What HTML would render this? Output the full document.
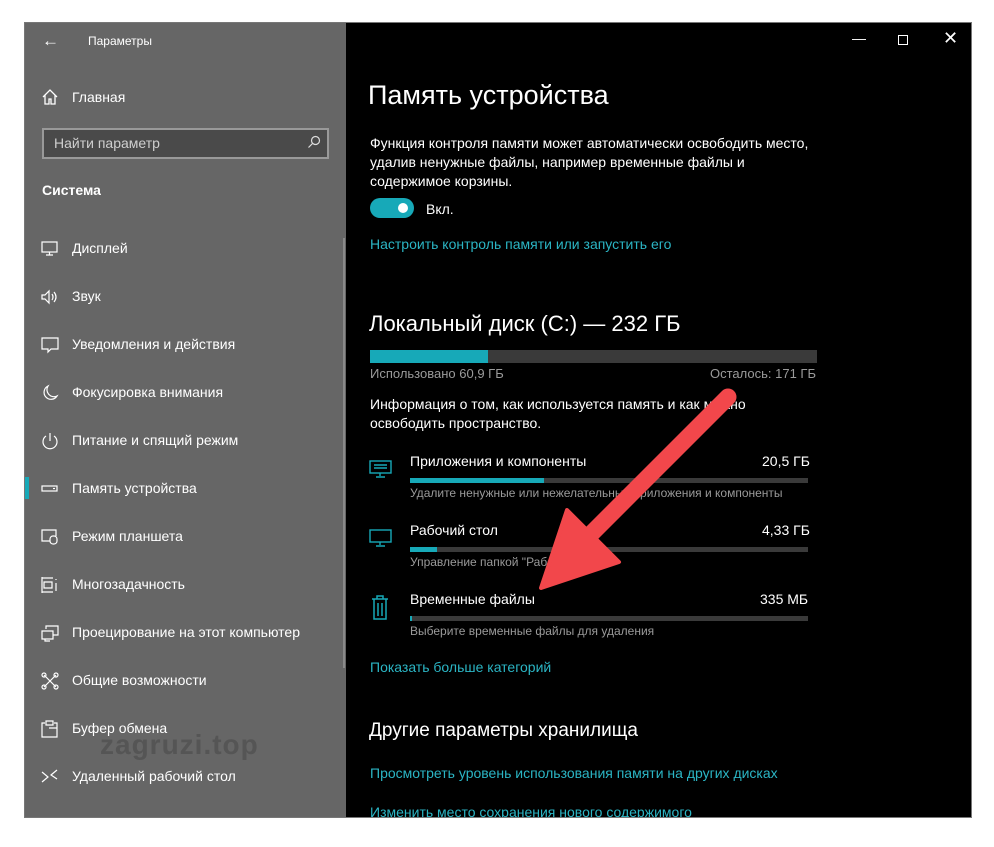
<!DOCTYPE html>
<html><head><meta charset="utf-8"><style>
*{margin:0;padding:0;box-sizing:border-box}
body{width:994px;height:847px;background:#fff;position:relative;overflow:hidden;font-family:"Liberation Sans",sans-serif}
.win{position:absolute;left:24px;top:22px;width:948px;height:796px;background:#000;border:1px solid #777;overflow:hidden}
.side{position:absolute;left:0;top:0;width:321px;height:796px;background:#666}
.t{position:absolute;white-space:nowrap}
.w{color:#fff}
.g{color:#9a9a9a}
.l{color:#2bb5c4}
.nav{position:absolute;left:47px;font-size:14px;color:#fff}
.ico{position:absolute;left:16px;width:18px;height:18px}
.bar{position:absolute;background:#3a3a3a}
.bar i{position:absolute;left:0;top:0;bottom:0;background:#17a9b8}
</style></head><body>
<div class="win">
 <div class="side">
  <div class="t w" style="left:17px;top:8px;font-size:17px">&#8592;</div>
  <div class="t w" style="left:63px;top:11px;font-size:12px">Параметры</div>
  <svg class="ico" style="top:65px" viewBox="0 0 18 18" fill="none" stroke="#fff" stroke-width="1.3"><path d="M2 9L9 2l7 7M4 7v9h4v-5h2v5h4V7"/></svg>
  <div class="nav" style="top:66px">Главная</div>
  <div style="position:absolute;left:17px;top:105px;width:287px;height:31px;border:2px solid #999;background:#4a4a4a"></div>
  <div class="t" style="left:29px;top:112px;font-size:14px;color:#cfcfcf">Найти параметр</div>
  <svg style="position:absolute;left:282px;top:112px" width="14" height="14" viewBox="0 0 14 14" fill="none" stroke="#ddd" stroke-width="1.2"><circle cx="8.5" cy="5.5" r="4"/><path d="M5.5 8.5L1.5 12.5"/></svg>
  <div class="t w" style="left:17px;top:159px;font-size:14px;font-weight:bold">Система</div>
  <div style="position:absolute;left:318px;top:215px;width:2px;height:430px;background:#8a8a8a"></div>
  <div style="position:absolute;left:0;top:454px;width:4px;height:22px;background:#17a9b8"></div>
  <svg class="ico" style="top:217px" viewBox="0 0 18 18" fill="none" stroke="#fff" stroke-width="1.2"><rect x="1" y="2" width="15" height="10"/><path d="M8.5 12v3M5 15h7"/></svg>
  <div class="nav" style="top:217px">Дисплей</div>
  <svg class="ico" style="top:265px" viewBox="0 0 18 18" fill="none" stroke="#fff" stroke-width="1.2"><path d="M1 7h3l4-4v12l-4-4H1zM11 6q2 3 0 6M13 4q4 5 0 10"/></svg>
  <div class="nav" style="top:265px">Звук</div>
  <svg class="ico" style="top:313px" viewBox="0 0 18 18" fill="none" stroke="#fff" stroke-width="1.2"><path d="M1 2h16v11H10l-3 3v-3H1z"/></svg>
  <div class="nav" style="top:313px">Уведомления и действия</div>
  <svg class="ico" style="top:361px" viewBox="0 0 18 18" fill="none" stroke="#fff" stroke-width="1.2"><path d="M7 2a7 7 0 1 0 9 10A7 7 0 0 1 7 2z"/></svg>
  <div class="nav" style="top:361px">Фокусировка внимания</div>
  <svg class="ico" style="top:409px" viewBox="0 0 18 18" fill="none" stroke="#fff" stroke-width="1.2"><path d="M5 4a7 7 0 1 0 8 0M9 1v8"/></svg>
  <div class="nav" style="top:409px">Питание и спящий режим</div>
  <svg class="ico" style="top:457px" viewBox="0 0 18 18" fill="none" stroke="#fff" stroke-width="1.2"><rect x="1" y="6" width="15" height="5"/><path d="M12 8.5h2"/></svg>
  <div class="nav" style="top:457px">Память устройства</div>
  <svg class="ico" style="top:505px" viewBox="0 0 18 18" fill="none" stroke="#fff" stroke-width="1.2"><path d="M9 13H1V2h14v6"/><rect x="9" y="8" width="7" height="8" rx="3"/></svg>
  <div class="nav" style="top:505px">Режим планшета</div>
  <svg class="ico" style="top:553px" viewBox="0 0 18 18" fill="none" stroke="#fff" stroke-width="1.2"><path d="M1 1v16M1 2h11M1 16h11M3 6h8v6H3zM15 3v1M15 7v8"/></svg>
  <div class="nav" style="top:553px">Многозадачность</div>
  <svg class="ico" style="top:601px" viewBox="0 0 18 18" fill="none" stroke="#fff" stroke-width="1.2"><path d="M5 5V2h12v9h-5M1 7h11v8H1zM4 15v2h5"/></svg>
  <div class="nav" style="top:601px">Проецирование на этот компьютер</div>
  <svg class="ico" style="top:649px" viewBox="0 0 18 18" fill="none" stroke="#fff" stroke-width="1.2"><path d="M3 3l12 12M15 3L3 15"/><circle cx="3" cy="3" r="2"/><circle cx="15" cy="3" r="2"/><circle cx="3" cy="15" r="2"/><circle cx="15" cy="15" r="2"/></svg>
  <div class="nav" style="top:649px">Общие возможности</div>
  <svg class="ico" style="top:697px" viewBox="0 0 18 18" fill="none" stroke="#fff" stroke-width="1.2"><path d="M4 3H1v14h15V3h-3M5 1h7v4H5zM8 8h8v9"/></svg>
  <div class="nav" style="top:697px">Буфер обмена</div>
  <div class="t" style="left:75px;top:706px;font-size:28px;font-weight:bold;color:#555;letter-spacing:1px">zagruzi.top</div>
  <svg class="ico" style="top:745px" viewBox="0 0 18 18" fill="none" stroke="#fff" stroke-width="1.2"><path d="M1 4l6 5-6 5M16 2l-6 5 6 4"/></svg>
  <div class="nav" style="top:745px">Удаленный рабочий стол</div>
 </div>
 <div class="t w" style="left:827px;top:7px;font-size:14px">&#8212;</div>
 <div style="position:absolute;left:873px;top:12px;width:10px;height:10px;border:1px solid #fff"></div>
 <div class="t w" style="left:918px;top:5px;font-size:18px">&#10005;</div>

 <div class="t w" style="left:343px;top:57px;font-size:27px">Память устройства</div>
 <div class="t w" style="left:345px;top:111px;font-size:14px;line-height:19px">Функция контроля памяти может автоматически освободить место,<br>удалив ненужные файлы, например временные файлы и<br>содержимое корзины.</div>
 <div style="position:absolute;left:345px;top:175px;width:44px;height:20px;border-radius:10px;background:#17a9b8"></div>
 <div style="position:absolute;left:373px;top:180px;width:10px;height:10px;border-radius:5px;background:#fff"></div>
 <div class="t w" style="left:401px;top:178px;font-size:14px">Вкл.</div>
 <div class="t l" style="left:345px;top:213px;font-size:14px">Настроить контроль памяти или запустить его</div>

 <div class="t w" style="left:344px;top:288px;font-size:22px">Локальный диск (C:) — 232 ГБ</div>
 <div class="bar" style="left:345px;top:327px;width:447px;height:13px"><i style="width:118px"></i></div>
 <div class="t g" style="left:345px;top:343px;font-size:13px">Использовано 60,9 ГБ</div>
 <div class="t g" style="left:685px;top:343px;font-size:13px">Осталось: 171 ГБ</div>
 <div class="t w" style="left:345px;top:372px;font-size:14px;line-height:19px">Информация о том, как используется память и как можно<br>освободить пространство.</div>

 <svg style="position:absolute;left:344px;top:436px" width="24" height="20" viewBox="0 0 24 20" fill="none" stroke="#17a9b8" stroke-width="1.4"><rect x="1" y="2" width="21" height="12"/><path d="M11 14v3M7 18h9M5 6h13M5 9h13"/></svg>
 <div class="t w" style="left:385px;top:430px;font-size:14px">Приложения и компоненты</div>
 <div class="t w" style="left:737px;top:430px;font-size:14px">20,5 ГБ</div>
 <div class="bar" style="left:385px;top:455px;width:398px;height:5px"><i style="width:134px"></i></div>
 <div class="t g" style="left:385px;top:463px;font-size:12px">Удалите ненужные или нежелательные приложения и компоненты</div>

 <svg style="position:absolute;left:344px;top:505px" width="24" height="20" viewBox="0 0 24 20" fill="none" stroke="#17a9b8" stroke-width="1.4"><rect x="1" y="2" width="21" height="12"/><path d="M11 14v3M7 18h9"/></svg>
 <div class="t w" style="left:385px;top:499px;font-size:14px">Рабочий стол</div>
 <div class="t w" style="left:737px;top:499px;font-size:14px">4,33 ГБ</div>
 <div class="bar" style="left:385px;top:524px;width:398px;height:5px"><i style="width:27px"></i></div>
 <div class="t g" style="left:385px;top:532px;font-size:12px">Управление папкой "Рабочий стол"</div>

 <svg style="position:absolute;left:346px;top:572px" width="18" height="26" viewBox="0 0 18 26" fill="none" stroke="#17a9b8" stroke-width="1.5"><path d="M1 4h16M6 4V1h6v3M3 4v20h12V4M7 8v13M11 8v13"/></svg>
 <div class="t w" style="left:385px;top:568px;font-size:14px">Временные файлы</div>
 <div class="t w" style="left:735px;top:568px;font-size:14px">335 МБ</div>
 <div class="bar" style="left:385px;top:593px;width:398px;height:5px"><i style="width:2px"></i></div>
 <div class="t g" style="left:385px;top:601px;font-size:12px">Выберите временные файлы для удаления</div>

 <div class="t l" style="left:345px;top:636px;font-size:14px">Показать больше категорий</div>
 <div class="t w" style="left:344px;top:697px;font-size:19px">Другие параметры хранилища</div>
 <div class="t l" style="left:345px;top:742px;font-size:14px">Просмотреть уровень использования памяти на других дисках</div>
 <div class="t l" style="left:345px;top:781px;font-size:14px">Изменить место сохранения нового содержимого</div>
</div>
<svg style="position:absolute;left:0;top:0" width="994" height="847">
 <line x1="728" y1="397" x2="580" y2="545" stroke="#f2474b" stroke-width="17" stroke-linecap="round"/>
 <polygon points="541,588 567,510 619,562" fill="#f2474b" stroke="#f2474b" stroke-width="4" stroke-linejoin="round"/>
</svg>
</body></html>
